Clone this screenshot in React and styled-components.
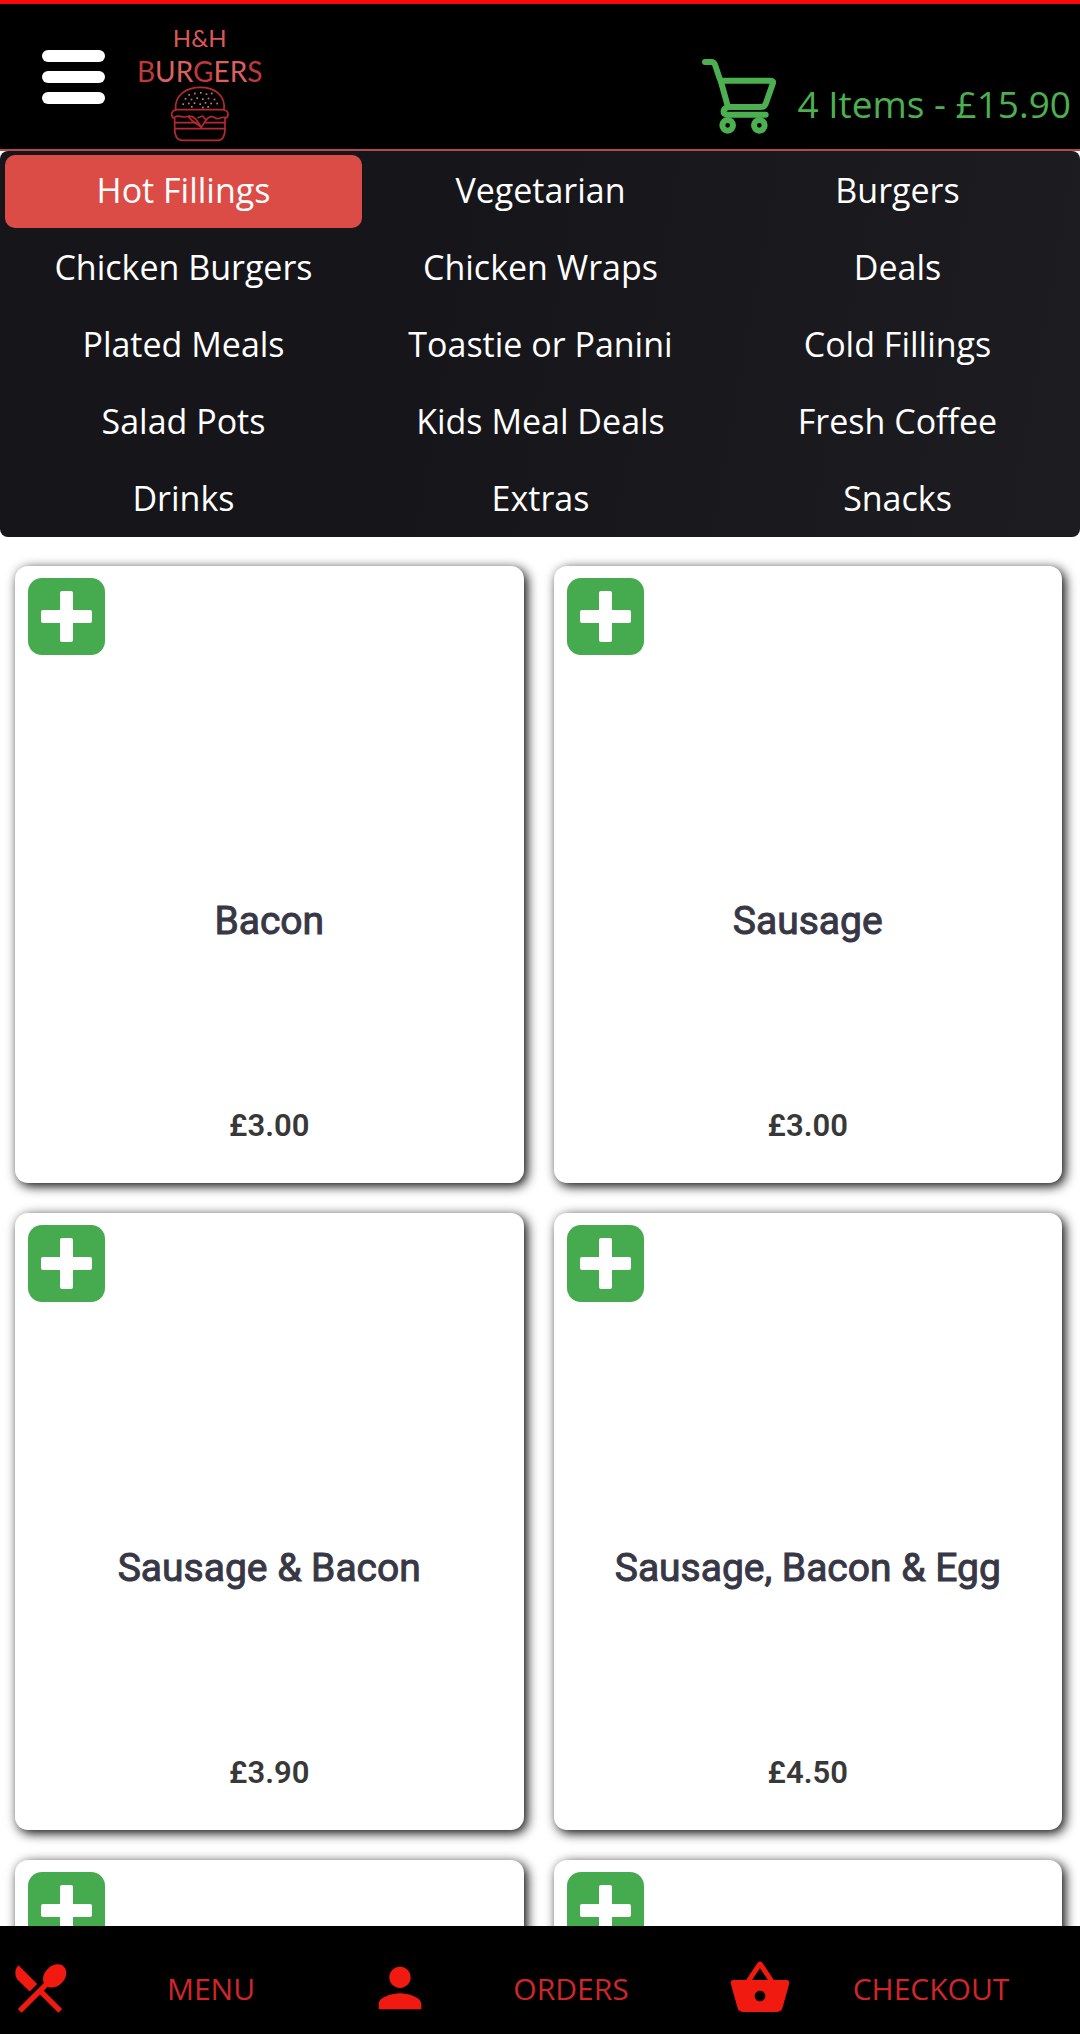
import styled, { createGlobalStyle } from "styled-components";
import {
  MdPerson,
  MdRestaurantMenu,
  MdShoppingBasket,
} from "react-icons/md";

const categories = [
  "Hot Fillings",
  "Vegetarian",
  "Burgers",
  "Chicken Burgers",
  "Chicken Wraps",
  "Deals",
  "Plated Meals",
  "Toastie or Panini",
  "Cold Fillings",
  "Salad Pots",
  "Kids Meal Deals",
  "Fresh Coffee",
  "Drinks",
  "Extras",
  "Snacks",
];

const products = [
  { id: 1, name: "Bacon", price: "£3.00" },
  { id: 2, name: "Sausage", price: "£3.00" },
  { id: 3, name: "Sausage & Bacon", price: "£3.90" },
  { id: 4, name: "Sausage, Bacon & Egg", price: "£4.50" },
  { id: 5 },
  { id: 6 },
];

const tabs = [
  { label: "MENU", icon: <MdRestaurantMenu /> },
  { label: "ORDERS", icon: <MdPerson /> },
  { label: "CHECKOUT", icon: <MdShoppingBasket /> },
];

const seeds = [
  [205, 254], [222, 250], [240, 248], [257, 252], [273, 250],
  [194, 266], [212, 268], [229, 264], [246, 267], [263, 265], [281, 268],
  [187, 282], [204, 280], [221, 279], [238, 282], [254, 278], [271, 280], [289, 280],
  [213, 290], [246, 292], [262, 290],
];

const BurgerDrawing = () => (
  <svg width="60" height="56" viewBox="148 228 180 168" fill="none" aria-hidden="true">
    <g stroke="#b52a30" strokeWidth="5" strokeLinecap="round" strokeLinejoin="round">
      <path d="M165 299C161 256 196 232 239 232s76 24 71 67z" />
      <path d="M165 300c-15 3-16 20-4 25M310 300c15 3 16 20 4 25" />
      <path d="M163 321c14-8 22 4 34-1 12-4 20-2 28 7l17 25 14-22c9-12 19-13 28-6 9 6 17-4 29-2" />
      <path d="M204 321c10 14 22 18 38 31M256 330l-10-12-14 5" />
      <path d="M162 338h64M255 338h57M162 356h151" />
      <path d="M162 325v31c0 22 8 35 24 35h104c16 0 23-13 23-35v-31" />
    </g>
    <g fill="#c77b78">
      {seeds.map(([x, y]) => (
        <rect key={`${x}-${y}`} x={x - 2} y={y - 2} width="5" height="5" />
      ))}
    </g>
  </svg>
);

const CartDrawing = () => (
  <svg width="74" height="76" viewBox="71 84 222 228" fill="none" aria-hidden="true">
    <g stroke="#4caf50" strokeWidth="18" strokeLinecap="round" strokeLinejoin="round">
      <path d="M80 96h19c7 0 10 4 12 11l13 39" />
      <path d="M127 152h149c8 0 10 3 7 10l-20 57c-3 9-7 12-15 12h-99z" />
      <path d="M146 233c-13 4-15 20 2 21h114" />
      <circle cx="148" cy="286" r="16" />
      <circle cx="243" cy="286" r="16" />
    </g>
  </svg>
);

const PlusDrawing = () => (
  <svg width="77" height="77" viewBox="0 0 77 77" aria-hidden="true">
    <rect width="77" height="77" rx="14" fill="#46ab4e" />
    <path
      d="M34 13h9q2 0 2 2v17h17q2 0 2 2v9q0 2-2 2H45v17q0 2-2 2h-9q-2 0-2-2V45H15q-2 0-2-2v-9q0-2 2-2h17V15q0-2 2-2z"
      fill="#fff"
    />
  </svg>
);

const App = () => {
  return (
    <>
      <GlobalStyle />
      <Shell>
        <Header>
          <MenuButton type="button" aria-label="Open menu">
            <MenuBar />
            <MenuBar />
            <MenuBar />
          </MenuButton>

          <Logo href="#">
            <LogoTop>H&amp;H</LogoTop>
            <LogoName>
              B<Bright>UR</Bright>G<Bright>ER</Bright>S
            </LogoName>
            <BurgerDrawing />
          </Logo>

          <CartLink href="#">
            <CartDrawing />
            <CartText>4 Items - £15.90</CartText>
          </CartLink>
        </Header>

        <Categories>
          {categories.map((name, i) => (
            <Category key={name} href="#" $active={i === 0}>
              {name}
            </Category>
          ))}
        </Categories>

        <Products>
          {products.map(({ id, name, price }) => (
            <Card key={id}>
              <AddButton type="button" aria-label="Add to order">
                <PlusDrawing />
              </AddButton>
              <Photo />
              {name && <ProductName>{name}</ProductName>}
              {price && <Price>{price}</Price>}
            </Card>
          ))}
        </Products>

        <BottomBar>
          {tabs.map(({ label, icon }) => (
            <Tab key={label} href="#">
              {icon}
              <TabLabel>{label}</TabLabel>
            </Tab>
          ))}
        </BottomBar>
      </Shell>
    </>
  );
};

const GlobalStyle = createGlobalStyle`
  * {
    box-sizing: border-box;
  }

  body {
    margin: 0;
    background-color: #fff;
    font-family: "Open Sans", "Noto Sans", sans-serif;
  }

  a {
    color: inherit;
    text-decoration: none;
  }

  button {
    background: none;
    border: 0;
    cursor: pointer;
    padding: 0;
  }
`;

const Shell = styled.div`
  display: flex;
  flex-direction: column;
  height: 100vh;
`;

const Header = styled.header`
  align-items: center;
  background-color: #000;
  border-bottom: 2px solid #b04a4c;
  border-top: 4px solid #f80a0c;
  display: flex;
  flex-shrink: 0;
  height: 151px;
  padding: 0 9px 0 42px;
`;

const MenuButton = styled.button`
  display: flex;
  flex-direction: column;
  gap: 9px;
  width: 63px;
`;

const MenuBar = styled.span`
  background-color: #fff;
  border-radius: 6px;
  height: 12px;
  width: 100%;
`;

const Logo = styled.a`
  align-items: center;
  color: #c0383c;
  display: flex;
  flex-direction: column;
  font-family: Lato, sans-serif;
  margin-left: 32px;
  padding-top: 15px;
`;

const LogoTop = styled.span`
  color: #dc5858;
  font-size: 24px;
  line-height: 24px;
  margin-bottom: 6px;
`;

const LogoName = styled.span`
  font-size: 28px;
  line-height: 30px;
`;

const Bright = styled.span`
  color: #dc6060;
`;

const CartLink = styled.a`
  align-items: flex-end;
  align-self: flex-end;
  color: #4caf50;
  display: flex;
  gap: 21px;
  margin-left: auto;
  padding-bottom: 15px;
`;

const CartText = styled.span`
  font-size: 37px;
  line-height: 48px;
  padding-bottom: 6px;
`;

const Categories = styled.nav`
  background-image: linear-gradient(100deg, #161519 40%, #1d1c21);
  border-radius: 8px;
  display: grid;
  flex-shrink: 0;
  grid-template-columns: repeat(3, 1fr);
  padding: 4px 4px 1px 5px;
  row-gap: 4px;
`;

const Category = styled.a`
  background-color: ${({ $active }) => ($active ? "#db4c46" : "transparent")};
  border-radius: 10px;
  color: #fff;
  font-size: 34px;
  line-height: 48px;
  padding: 11px 0 14px;
  text-align: center;
`;

const Products = styled.main`
  display: grid;
  flex: 1;
  gap: 30px;
  grid-auto-rows: max-content;
  grid-template-columns: repeat(2, 1fr);
  min-height: 0;
  overflow-y: auto;
  padding: 29px 18px 30px 15px;
  scrollbar-width: none;
`;

const Card = styled.article`
  align-items: center;
  background-color: #fff;
  border-radius: 13px;
  box-shadow: 3px 3px 12px #000;
  display: flex;
  flex-direction: column;
  font-family: Roboto, sans-serif;
  min-height: 617px;
  padding: 12px 13px 39px;
`;

const AddButton = styled.button`
  align-self: flex-start;
  height: 77px;
  width: 77px;
`;

const Photo = styled.div`
  height: 241px;
`;

const ProductName = styled.h2`
  -webkit-text-stroke: 1px #383745;
  color: #383745;
  font-size: 39px;
  font-weight: 400;
  line-height: 50px;
  margin: 0;
`;

const Price = styled.p`
  color: #383838;
  font-size: 31px;
  font-weight: 600;
  line-height: 36px;
  margin: auto 0 0;
`;

const BottomBar = styled.footer`
  background-color: #000;
  color: #f01a10;
  display: grid;
  flex-shrink: 0;
  grid-template-columns: repeat(3, 1fr);
  height: 108px;
  padding-top: 15px;
`;

const Tab = styled.a`
  align-items: center;
  display: flex;
  padding: 0 10px 0 8px;

  svg {
    flex-shrink: 0;
    height: 64px;
    width: 64px;
  }
`;

const TabLabel = styled.span`
  color: #d0262a;
  flex: 1;
  font-size: 30px;
  line-height: 40px;
  padding-top: 2px;
  text-align: center;
`;

export default App;
